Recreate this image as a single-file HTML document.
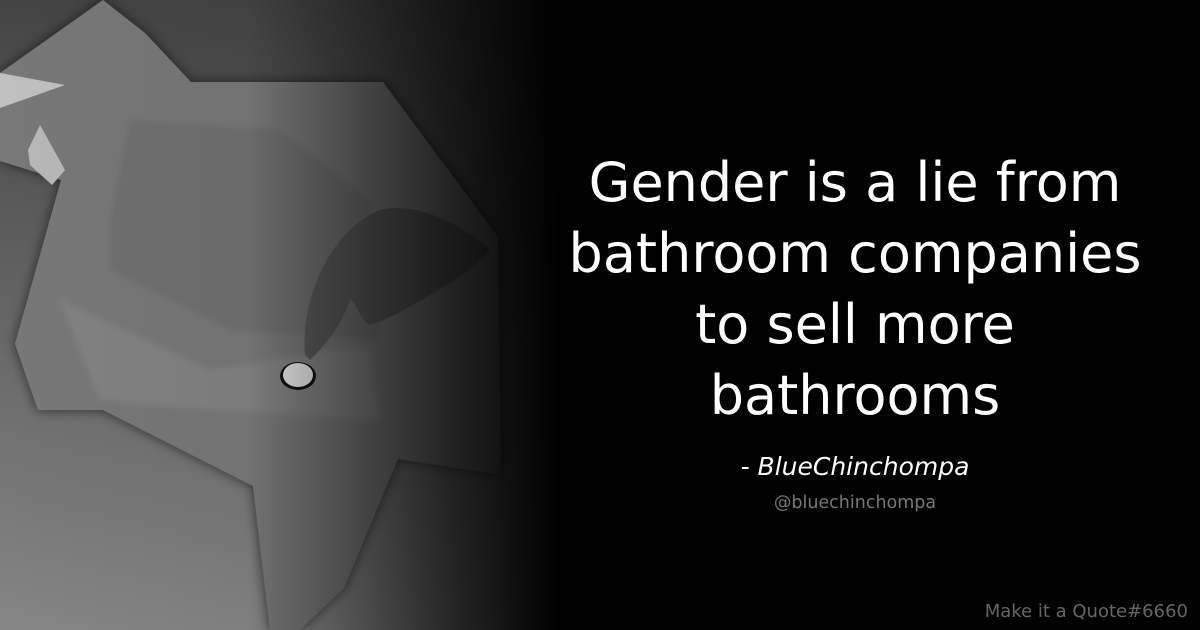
<!DOCTYPE html>
<html><head><meta charset="utf-8"><style>
html,body{margin:0;padding:0;background:#000;}
#w{position:relative;width:1200px;height:630px;overflow:hidden;background:#000;font-family:"DejaVu Sans","Liberation Sans",sans-serif;}
#q{position:absolute;left:500px;width:710px;top:147px;text-align:center;color:#fff;font-size:54px;line-height:71px;}
#a{position:absolute;left:500px;width:710px;top:452px;text-align:center;color:#fff;font-size:25px;font-style:italic;}
#h{position:absolute;left:500px;width:710px;top:493px;text-align:center;color:#777;font-size:17.5px;}
#m{position:absolute;right:12px;bottom:8px;color:#666;font-size:18px;}
</style></head><body><div id="w">
<svg width="620" height="630" style="position:absolute;left:0;top:0">
<defs>
<linearGradient id="bg" x1="0" y1="0" x2="0" y2="1"><stop offset="0" stop-color="#444"/><stop offset="1" stop-color="#868686"/></linearGradient>
<linearGradient id="fade" x1="0" y1="0" x2="1" y2="0"><stop offset="0" stop-color="#000" stop-opacity="0"/><stop offset="0.4" stop-color="#000" stop-opacity="0.05"/><stop offset="0.72" stop-color="#000" stop-opacity="0.7"/><stop offset="0.9" stop-color="#000" stop-opacity="1"/></linearGradient>
<filter id="sh"><feDropShadow dx="0" dy="0" stdDeviation="6" flood-color="#000" flood-opacity="0.6"/></filter>
<filter id="bl"><feGaussianBlur stdDeviation="3"/></filter>
</defs>
<rect width="620" height="630" fill="url(#bg)"/>
<polygon filter="url(#sh)" fill="#787878" points="0,73 103,0 145,33 191,82 383,82 498,237 501,475 398,459 344,588 300,630 270,630 253,486 103,410 38,410 15,344 61,180 0,161"/>
<g filter="url(#bl)">
<polygon fill="#707070" points="130,120 280,130 370,200 380,340 230,330 110,270 110,220"/>
<polygon fill="#828282" points="60,300 210,370 330,350 370,350 380,420 210,410 100,400"/>
</g>
<polygon fill="#c0c0c0" points="0,73 65,85 0,108"/>
<polygon fill="#b8b8b8" points="28,150 40,125 65,170 52,185 30,165"/>
<path d="M305 355 C300 300 330 230 380 210 C420 200 470 230 490 250 L470 270 C440 290 390 320 370 325 C360 320 355 300 350 300 C340 330 320 350 310 360 Z" fill="#5a5a5a"/>
<ellipse cx="298" cy="376" rx="18" ry="14" fill="#111"/>
<ellipse cx="298" cy="375" rx="15" ry="12" fill="#e8e8e8"/>
<rect width="620" height="630" fill="url(#fade)"/>
</svg>
<div id="q">Gender is a lie from<br>bathroom companies<br>to sell more<br>bathrooms</div>
<div id="a">- BlueChinchompa</div>
<div id="h">@bluechinchompa</div>
<div id="m">Make it a Quote#6660</div>
</div></body></html>
